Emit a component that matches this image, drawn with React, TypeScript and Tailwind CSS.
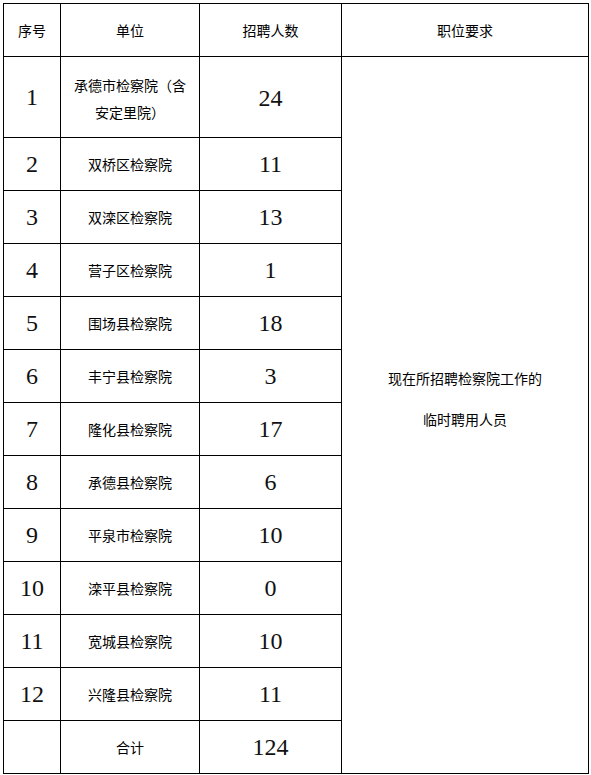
import React from "react";

const rows: [string, string, string][] = [
  ["2", "双桥区检察院", "11"],
  ["3", "双滦区检察院", "13"],
  ["4", "营子区检察院", "1"],
  ["5", "围场县检察院", "18"],
  ["6", "丰宁县检察院", "3"],
  ["7", "隆化县检察院", "17"],
  ["8", "承德县检察院", "6"],
  ["9", "平泉市检察院", "10"],
  ["10", "滦平县检察院", "0"],
  ["11", "宽城县检察院", "10"],
  ["12", "兴隆县检察院", "11"],
];

const cn = "font-['SimSun','Noto_Sans_CJK_SC',sans-serif] text-[14px] text-black";
const num = "font-['Liberation_Serif','Times_New_Roman',serif] text-[24px] text-[#111]";
const cell = "bg-white flex items-center justify-center";

export default function App() {
  return (
    <div className="w-[591px] h-[775px] bg-white pl-[3px] pt-[3px]">
      <div className="grid w-fit bg-black p-px gap-px grid-cols-[56px_138px_141px_246px] grid-rows-[52px_80px_repeat(12,52px)]">
        <div className={`${cell} ${cn} col-start-1 row-start-1`}>序号</div>
        <div className={`${cell} ${cn} col-start-2 row-start-1`}>单位</div>
        <div className={`${cell} ${cn} col-start-3 row-start-1`}>招聘人数</div>
        <div className={`${cell} ${cn} col-start-4 row-start-1`}>职位要求</div>

        <div className={`${cell} ${num} col-start-1 row-start-2`}>1</div>
        <div className={`${cell} ${cn} col-start-2 row-start-2 flex-col pt-[4px] leading-[27px]`}>
          <div>承德市检察院（含</div>
          <div>安定里院）</div>
        </div>
        <div className={`${cell} ${num} col-start-3 row-start-2 pt-[2px]`}>24</div>

        <div className={`${cell} ${cn} col-start-4 row-start-2 row-span-13 flex-col gap-[21px] pb-[34px] leading-[20px]`}>
          <div>现在所招聘检察院工作的</div>
          <div>临时聘用人员</div>
        </div>

        {rows.map(([n, unit, count]) => (
          <React.Fragment key={n}>
            <div className={`${cell} ${num} col-start-1`}>{n}</div>
            <div className={`${cell} ${cn} col-start-2`}>{unit}</div>
            <div className={`${cell} ${num} col-start-3`}>{count}</div>
          </React.Fragment>
        ))}

        <div className={`${cell} col-start-1`}></div>
        <div className={`${cell} ${cn} col-start-2`}>合计</div>
        <div className={`${cell} ${num} col-start-3`}>124</div>
      </div>
    </div>
  );
}
